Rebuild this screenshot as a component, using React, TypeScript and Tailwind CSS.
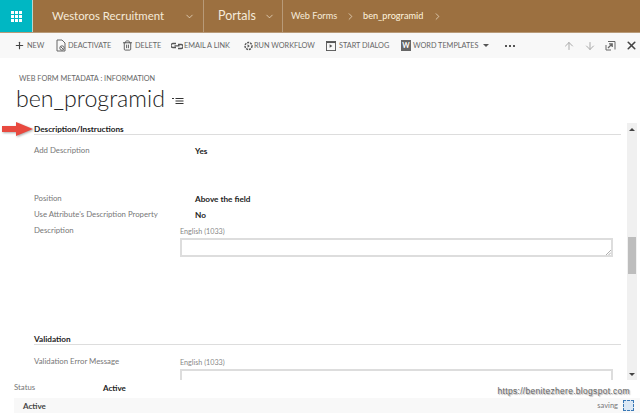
import { ArrowDown, ArrowUp, ChevronDown, ChevronRight, Plus, Trash2, X } from "lucide-react";
import { ReactNode } from "react";

const font = "font-['Lato','Noto_Sans',sans-serif]";

const ToolItem = ({ icon, label, className }: { icon: ReactNode; label: string; className: string }) => (
  <div className={`flex items-center ${className}`}>
    {icon}
    <span className="text-[7.3px] leading-none text-[#666] whitespace-nowrap">{label}</span>
  </div>
);

const DeactivateIcon = () => (
  <svg width="10" height="13" viewBox="0 0 10 13" className="mr-[2px]" fill="none" stroke="#666" strokeWidth="1">
    <path d="M1 1h5l3 3v8H1z" />
    <circle cx="6" cy="9" r="2.2" />
    <path d="M4.5 7.5l3 3" />
  </svg>
);

const LinkIcon = () => (
  <svg width="12" height="8" viewBox="0 0 12 8" className="mr-[1px]" fill="none" stroke="#555" strokeWidth="1.3">
    <path d="M5 1.5H2a1.5 1.5 0 0 0 0 4h3M7 2.5h3a1.5 1.5 0 0 1 0 4H7M3.5 3.8h5" />
  </svg>
);

const WorkflowIcon = () => (
  <svg width="11" height="12" viewBox="0 0 12 12" fill="none" stroke="#555" strokeWidth="1.6">
    <circle cx="6" cy="6" r="3.8" strokeDasharray="2.2 1" />
    <path d="M5 4.2l2.4 1.8L5 7.8z" fill="#555" strokeWidth="0" />
  </svg>
);

const DialogIcon = () => (
  <svg width="10" height="10" viewBox="0 0 11 11" className="mr-[3px]" fill="none" stroke="#555">
    <rect x="0.5" y="0.5" width="10" height="10" />
    <path d="M0.5 1.5h10" strokeWidth="1.5" />
    <path d="M4 3.5l3 2-3 2z" fill="#555" strokeWidth="0" />
  </svg>
);

const ExpandIcon = () => (
  <svg width="11" height="11" viewBox="0 0 11 11" fill="none" stroke="#666">
    <path d="M3 1.5h7v8M1 5v5h5" />
    <path d="M3 8l4-4M4 3.8h3.2V7" strokeWidth="1.3" />
  </svg>
);

const ListIcon = () => (
  <svg width="12" height="8" viewBox="0 0 12 8" className="ml-[7px] mt-[4px]" stroke="#333">
    <path d="M0 1.5h2" />
    <path d="M3.5 1.5h8M3.5 4h8M3.5 6.5h8" strokeWidth="1.2" />
  </svg>
);

const ResizeGrip = () => (
  <svg width="5" height="5" viewBox="0 0 5 5" className="absolute right-0 bottom-0" stroke="#999" strokeWidth="0.8">
    <path d="M0 5l5-5M2.5 5L5 2.5" />
  </svg>
);

const SectionHeader = ({ title }: { title: string }) => (
  <div className="border-b border-[#ddd] mr-[6px] h-[11px] flex items-center">
    <span className="text-[8.2px] font-bold text-[#222] leading-none">{title}</span>
  </div>
);

const Field = ({ label, value, className }: { label: string; value: string; className: string }) => (
  <div className={`flex items-center h-[12px] ${className}`}>
    <span className="w-[161px] text-[7.8px] text-[#777] leading-none whitespace-nowrap">{label}</span>
    <span className="text-[8.2px] font-bold text-[#222] leading-none">{value}</span>
  </div>
);

const TextBlock = ({ grip }: { grip?: boolean }) => (
  <div className="w-[433px] mt-[3px]">
    <div className="text-[7.2px] leading-[10px] text-[#888]">English (1033)</div>
    <div className="relative h-[19px] mt-[1px] border-2 border-[#ddd] bg-white">{grip && <ResizeGrip />}</div>
  </div>
);

export default function App() {
  return (
    <div className={`relative w-[640px] h-[415px] overflow-hidden bg-white flex flex-col ${font}`}>
      {/* top nav */}
      <div className="h-[33px] shrink-0 flex bg-[#9c7040] text-[#f5ead9] border-b border-[#b89a78]">
        <div className="w-[33px] flex items-center justify-center bg-[#00b7c3] border-r border-[#b9d6d0]">
          <div className="grid grid-cols-3 gap-[1px]">
            {Array.from({ length: 9 }).map((_, i) => (
              <div key={i} className="w-[3px] h-[3px] bg-white" />
            ))}
          </div>
        </div>
        <div className="w-[171px] flex items-center border-r border-[#b89a78] pl-[19px]">
          <span className="text-[11.4px] w-[132px] whitespace-nowrap">Westoros Recruitment</span>
          <ChevronDown size={11} strokeWidth={1.5} />
        </div>
        <div className="w-[79px] flex items-center border-r border-[#b89a78] pl-[14px]">
          <span className="text-[12.5px] w-[46px]">Portals</span>
          <ChevronDown size={11} strokeWidth={1.5} />
        </div>
        <div className="flex items-center pl-[8px] text-[9.2px]">
          <span className="w-[54px] whitespace-nowrap">Web Forms</span>
          <ChevronRight size={11} strokeWidth={1.5} />
          <span className="ml-[7px] w-[69px] text-[#fff4df]">ben_programid</span>
          <ChevronRight size={11} strokeWidth={1.5} />
        </div>
      </div>

      {/* command bar */}
      <div className="h-[25px] shrink-0 flex items-center bg-[#f8f8f8]">
        <ToolItem className="ml-[14px] w-[42px]" icon={<Plus size={11} strokeWidth={2.5} color="#444" className="mr-[2px]" />} label="NEW" />
        <ToolItem className="w-[66px]" icon={<DeactivateIcon />} label="DEACTIVATE" />
        <ToolItem className="w-[49px]" icon={<Trash2 size={11} color="#555" className="mr-[2px]" />} label="DELETE" />
        <ToolItem className="w-[72px]" icon={<LinkIcon />} label="EMAIL A LINK" />
        <ToolItem className="w-[83px]" icon={<WorkflowIcon />} label="RUN WORKFLOW" />
        <ToolItem className="w-[75px]" icon={<DialogIcon />} label="START DIALOG" />
        <div className="flex items-center w-[124px]">
          <div className="w-[10px] h-[11px] bg-[#666] mr-[2px] flex items-center justify-center text-[7px] font-bold text-white leading-none">
            W
          </div>
          <span className="text-[7.3px] leading-none text-[#666] whitespace-nowrap">WORD TEMPLATES</span>
          <div className="ml-[5px] border-x-[3px] border-t-[3px] border-x-transparent border-t-[#555]" />
          <div className="ml-[16px] flex gap-[2px]">
            <div className="w-[2px] h-[2px] bg-[#555]" />
            <div className="w-[2px] h-[2px] bg-[#555]" />
            <div className="w-[2px] h-[2px] bg-[#555]" />
          </div>
        </div>
        <div className="ml-[38px] flex items-center gap-[9px]">
          <ArrowUp size={12} color="#aaa" />
          <ArrowDown size={12} color="#aaa" />
          <ExpandIcon />
          <X size={13} strokeWidth={3} color="#444" />
        </div>
      </div>

      {/* title */}
      <div className="h-[65px] shrink-0 pl-[19px] pt-[16px]">
        <div className="text-[7.3px] leading-[10px] text-[#666] whitespace-nowrap">WEB FORM METADATA : INFORMATION</div>
        <div className="flex items-center -ml-[3px] mt-[1px]">
          <span className="text-[23.2px] leading-[27px] font-light text-[#222]">ben_programid</span>
          <ListIcon />
        </div>
      </div>

      {/* form body */}
      <div className="flex-1 min-h-0 flex overflow-hidden">
        <div className="w-[627px] pl-[34px] pt-[1px] overflow-hidden">
          <SectionHeader title="Description/Instructions" />
          <Field className="mt-[10px]" label="Add Description" value="Yes" />
          <Field className="mt-[36px]" label="Position" value="Above the field" />
          <Field className="mt-[4px]" label="Use Attribute's Description Property" value="No" />
          <div className="flex mt-[3px]">
            <span className="w-[146px] text-[7.8px] leading-[12px] text-[#777]">Description</span>
            <TextBlock grip />
          </div>
          <div className="mt-[77px]">
            <SectionHeader title="Validation" />
          </div>
          <div className="flex mt-[10px]">
            <span className="w-[146px] text-[7.8px] leading-[12px] text-[#777]">Validation Error Message</span>
            <TextBlock />
          </div>
        </div>
        {/* scrollbar */}
        <div className="w-[10px] bg-[#f0f0f0] flex flex-col items-center relative">
          <div className="mt-[5px] border-x-[3px] border-b-[3px] border-x-transparent border-b-[#444]" />
          <div className="mt-[106px] w-[8px] h-[37px] bg-[#bdbdbd]" />
          <div className="absolute bottom-[4px] border-x-[3px] border-t-[3px] border-x-transparent border-t-[#444]" />
        </div>
      </div>

      {/* footer */}
      <div className="h-[35px] shrink-0 bg-white pl-[14px] flex flex-col">
        <div className="h-[16px] flex items-center">
          <span className="w-[89px] text-[7.8px] text-[#777] leading-none">Status</span>
          <span className="text-[8px] font-bold text-[#222] leading-none">Active</span>
        </div>
        <div className="h-[15px] mt-[2px] bg-[#f8f8f8] flex items-center pl-[9px] pr-[6px]">
          <span className="text-[8px] font-bold text-[#444] leading-none">Active</span>
          <span className="ml-auto text-[7.5px] text-[#777] leading-none">saving</span>
          <div className="ml-[5px] w-[11px] h-[11px] border border-dashed border-[#3a78b5] bg-[#dbe8f5]" />
        </div>
      </div>

      {/* arrow annotation */}
      <svg width="34" height="18" viewBox="0 0 34 18" className="absolute left-[1px] top-[120px] drop-shadow-[1px_1px_1px_#aaa]">
        <path d="M1 6h14V2l17 7-17 7v-4H1z" fill="#e8493f" />
      </svg>

      {/* watermark */}
      <div className="absolute right-[10px] top-[387px] text-[8.5px] leading-none text-[#666] tracking-[0.3px] font-['Liberation_Sans',sans-serif] [text-shadow:1px_1px_1px_#aaa]">
        https://benitezhere.blogspot.com
      </div>
    </div>
  );
}
